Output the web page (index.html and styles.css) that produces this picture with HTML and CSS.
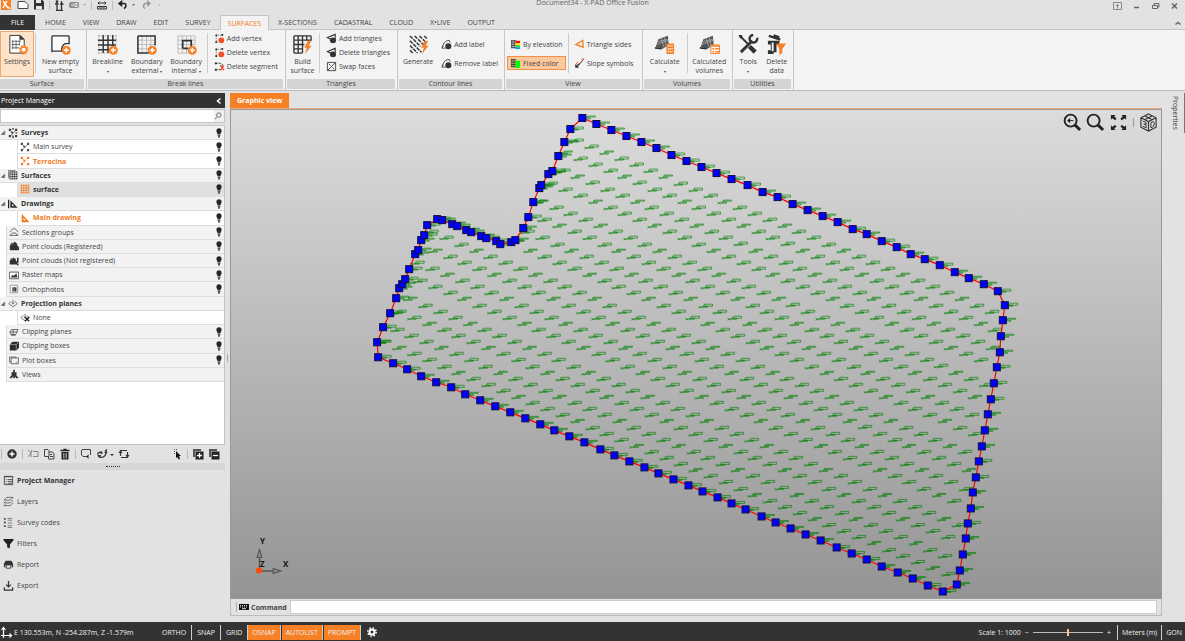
FILE: index.html
```html
<!DOCTYPE html>
<html lang="en">
<head>
<meta charset="utf-8">
<title>Document34 - X-PAD Office Fusion</title>
<link rel="stylesheet" href="styles.css">
</head>
<body>
<svg class="defs" aria-hidden="true">
  <symbol id="bulb" viewBox="0 0 6 10"><path d="M3 .3a2.6 2.6 0 0 1 2.6 2.6c0 1.2-.9 1.7-1.1 3.1h-3C1.300 4.600.4 4.100.4 2.900A2.600 2.600 0 0 1 3 .3zM1.600 6.500h2.800v1.200H1.600zM2 8.200h2v1.300H2z" fill="#262626"/></symbol>
  <symbol id="plus" viewBox="0 0 10 10"><circle cx="5" cy="5" r="4.700" fill="#f58025"/><path d="M5 2.400v5.200M2.400 5h5.200" stroke="#fff" stroke-width="1.500"/></symbol>
  <symbol id="bolt" viewBox="0 0 8 14"><path d="M4 0 .6 7h2.600L1 13.500 7.700 5H5L7.500 0z" fill="#f58025"/></symbol>
  <symbol id="vertex" viewBox="0 0 12 12"><path d="M2.500 10.500V2.500h7" fill="none" stroke="#666" stroke-dasharray="1 1"/><path d="M1.500 1.500h2v2h-2zM8 1h2v2H8zM1.500 9h2v2h-2z" fill="#333"/><circle cx="8" cy="8" r="3.200" fill="#f0512d"/></symbol>
  <symbol id="tri" viewBox="0 0 12 12"><path d="M10 1.500 1.500 5 10 9.500z" fill="none" stroke="#333" stroke-width="1.200"/><circle cx="7.500" cy="8" r="3.200" fill="#333"/></symbol>
  <symbol id="contour" viewBox="0 0 12 12"><path d="M1.500 9.500C3 3 5 2 9 1.500L10 4M2 7l-1 3h4" fill="none" stroke="#444"/><circle cx="8" cy="8" r="3.300" fill="#333"/></symbol>
  <symbol id="nodes" viewBox="0 0 12 12"><path d="M3 9.500 9 3M2.500 3 5 5" stroke="currentColor" stroke-width=".8"/><path d="M1 1h2.500v2.500H1zM8.500 1H11v2.500H8.500zM1 8.500h2.500V11H1zM8.500 8.500H11V11H8.500zM4 4.500h2v2H4z" fill="currentColor"/></symbol>
  <symbol id="mesh" viewBox="0 0 12 12"><path d="M1 1.500h10M1 4.500h10M1 7.500h10M1 10.500h10M1.500 1v10M4.500 1v10M7.500 1v10M10.500 1v10" stroke="currentColor" fill="none"/></symbol>
  <symbol id="square" viewBox="0 0 12 12"><path d="M2 1v10h9.500z" fill="currentColor"/><path d="M4.300 6v2.700H7z" fill="#fff"/></symbol>
  <symbol id="cloud" viewBox="0 0 12 12"><path d="M1 11V5.500L3 2l2 .5L7 1l2.500 2 .5 2.500 2 2V11z" fill="#333"/><path d="m2 5 4-3" stroke="#aaa" stroke-width=".7"/></symbol>
  <symbol id="plane" viewBox="0 0 12 12"><path d="M3.500 4 1 7l5 3.500L11 7 8.500 4M6 2v5M4.500 5.500 6 7.500l1.500-2" fill="none" stroke="#555" stroke-width=".9"/></symbol>
  <symbol id="surf" viewBox="0 0 22 22"><path d="m2 15 3-9 11-4 1 11-7 4z" fill="#555"/><path d="m3 12 14-5M4 9l12-3M8 5l4 11M12 4l2 11" stroke="#bbb" stroke-width=".8"/><path d="m1 16 8 1" stroke="#333" stroke-width="2"/></symbol>
</svg>

<header class="titlebar">
  <div class="quick">
    <svg width="12" height="11" viewBox="0 0 12 11"><path d="M1 0h10v10H1z" fill="#f58025"/><path d="m3 1 5 7M7 1 3 8M8 7l2 2" stroke="#fff" stroke-width="1.500"/></svg>
    <svg width="12" height="10" viewBox="0 0 12 10"><path d="M1 1.500h7l3 3v4H1z" fill="#fff" stroke="#444"/></svg>
    <svg width="10" height="10" viewBox="0 0 10 10"><path d="M0 0h8.500L10 2v7.500H0z" fill="#333"/><path d="M2 0h5v3H2zM2 6h6v3.500H2z" fill="#e8e8e8"/></svg>
    <i></i>
    <svg width="9" height="11" viewBox="0 0 9 11"><path d="M2 2v8M6.500 1v9M0 4h3.500M5 4h3.500M1 10.500h7" stroke="#333" stroke-width="1.300"/><circle cx="2" cy="1.500" r="1.300" fill="#333"/></svg>
    <svg width="17" height="10" viewBox="0 0 17 10"><rect y="2" width="10" height="6" rx="2" fill="#888"/><path d="M2 5h1m1-1.500v3m2-3h2v3H6z" stroke="#eee" fill="none"/><path d="m14 4 3 0-1.500 2z" fill="#aaa"/></svg>
    <i></i>
    <svg width="10" height="10" viewBox="0 0 10 10"><path d="M1 3h8M1 3l1.500-1.500M1 3l1.500 1.500M9 3 7.500 1.500M9 3 7.500 4.500M.5 9V6.500h9V9zM3 7v1.500M5 7v1.500M7 7v1.500" stroke="#333" fill="none"/></svg>
    <i></i>
    <svg width="19" height="10" viewBox="0 0 19 10"><path d="M1 3.500h5.500c2.500 1 1.500 4-.5 5M1 3.500 3.500 1.500v4z" stroke="#222" stroke-width="1.500" fill="none"/><path d="M14 4h3l-1.500 2z" fill="#777"/></svg>
    <svg width="19" height="10" viewBox="0 0 19 10"><path d="M8 3.500H3c-2 1-2 4 0 5M8 3.500 6 1.500v4z" stroke="#999" stroke-width="1.500" fill="none"/><path d="M16 4h3l-1.500 2z" fill="#bbb"/></svg>
  </div>
  <div class="doc-title">Document34 - X-PAD Office Fusion</div>
  <div class="window-buttons">
    <button aria-label="Ribbon options"><svg width="9" height="8" viewBox="0 0 9 8"><path d="M.5.5h8v7h-8zM4.500 6.500V2.500M3 4l1.500-1.500L6 4" fill="none" stroke="#888"/></svg></button>
    <button aria-label="Minimize"><svg width="9" height="8" viewBox="0 0 9 8"><path d="M2 5.500h5" stroke="#666" stroke-width="1.500"/></svg></button>
    <button aria-label="Restore"><svg width="9" height="8" viewBox="0 0 9 8"><path d="M3 3V1.500h5V5H6.500M1.500 3.500h5v3h-5z" fill="none" stroke="#666"/></svg></button>
    <button aria-label="Close"><svg width="9" height="8" viewBox="0 0 9 8"><path d="m2 1.500 5 5M7 1.500l-5 5" stroke="#666" stroke-width="1.500"/></svg></button>
  </div>
</header>

<nav class="tabs">
  <button class="file">FILE</button>
  <button>HOME</button><button>VIEW</button><button>DRAW</button><button>EDIT</button><button>SURVEY</button>
  <button class="current">SURFACES</button>
  <button>X-SECTIONS</button><button>CADASTRAL</button><button>CLOUD</button><button>X•LIVE</button><button>OUTPUT</button>
  <button class="collapse" aria-label="Collapse ribbon"><svg width="8" height="6" viewBox="0 0 8 6"><path d="m1.500 4.500 2.500-2 2.500 2" fill="none" stroke="#666" stroke-width="1.500"/></svg></button>
</nav>

<div class="ribbon">
  <section class="group g-surface">
    <div class="tools">
      <button class="big on"><svg viewBox="0 0 22 22"><path d="M3 1.500h11l4 4V20H3z" fill="#fff" stroke="#333"/><path d="M13 1v5h5z" fill="#333"/><path d="M5 7.500h10M5 11h8M5 14.500h8M6 7v9M9.500 7v9M13 7v5" stroke="#555" stroke-width=".9"/><circle cx="17.500" cy="16.500" r="3" fill="#fff" stroke="#f58025" stroke-width="1.600"/><circle cx="17.500" cy="16.500" r="4.400" fill="none" stroke="#f58025" stroke-width="1.400" stroke-dasharray="1.700 1.750"/></svg><span>Settings</span></button>
      <i class="rule"></i>
      <button class="big wide"><svg viewBox="0 0 22 22"><path d="M2 2h18v11h-6v7H2z" fill="#fafafa"/><path d="M2 2h18M2 2v17M20 2v8h-4q-4 2-4 8H2" fill="none" stroke="#333" stroke-width="1.400"/><use href="#plus" x="12" y="12" width="10" height="10"/></svg><span>New empty<br>surface</span></button>
    </div>
    <h2>Surface</h2>
  </section>
  <section class="group g-break">
    <div class="tools">
      <button class="big"><svg viewBox="0 0 22 22"><path d="M1 2h19M1 20h14M2 1v19M20 1v10" stroke="#aaa" stroke-dasharray="2 1"/><path d="M1 6.500h19M1 11.500h19M1 16.500h14M6.500 1v19M11.500 1v19M16.500 1v12" stroke="#333" stroke-width="1.500"/><use href="#plus" x="12" y="12" width="10" height="10"/></svg><span>Breakline<br><small>▾</small></span></button>
      <button class="big"><svg viewBox="0 0 22 22"><path d="M6.500 2v18M11 2v18M15.500 2v18M2 6.500h18M2 11h18M2 15.500h18" stroke="#bbb"/><path d="M2 2h18v10M2 2v18h12" fill="none" stroke="#333" stroke-width="1.600"/><use href="#plus" x="12" y="12" width="10" height="10"/></svg><span>Boundary<br>external <small>▾</small></span></button>
      <button class="big"><svg viewBox="0 0 22 22"><path d="M2 2v18M6.500 2v18M11 2v18M15.500 2v12M20 2v10M2 2h18M2 6.500h18M2 11h18M2 15.500h12M2 20h12" stroke="#bbb"/><path d="M7 15V7h9v6M7 15h6" fill="none" stroke="#333" stroke-width="1.800"/><use href="#plus" x="12" y="12" width="10" height="10"/></svg><span>Boundary<br>internal <small>▾</small></span></button>
      <i class="rule"></i>
      <div class="stack">
        <button><svg><use href="#vertex"/></svg>Add vertex</button>
        <button><svg><use href="#vertex"/></svg>Delete vertex</button>
        <button><svg viewBox="0 0 12 12"><path d="M1 2.500h6l3 2M1 9.500h7M7 5l3 1" fill="none" stroke="#333" stroke-dasharray="3 1"/><path d="M1 1.500h2v2H1zM1 8.500h2v2H1z" fill="#333"/><path d="m7 5 4 5M11 5l-4 5" stroke="#f0512d" stroke-width="1.500"/></svg>Delete segment</button>
      </div>
    </div>
    <h2>Break lines</h2>
  </section>
  <section class="group g-triangles">
    <div class="tools">
      <button class="big"><svg viewBox="0 0 22 22"><path d="M2 2h18M2 6.500h18M2 11h11M2 15.500h9M2 20h9M2 2v18M6.500 2v18M11 2v18M15.500 2v5M20 2v5" stroke="#333" stroke-width="1.400"/><use href="#bolt" x="12" y="7" width="9" height="15"/></svg><span>Build<br>surface</span></button>
      <i class="rule"></i>
      <div class="stack">
        <button><svg><use href="#tri"/></svg>Add triangles</button>
        <button><svg><use href="#tri"/></svg>Delete triangles</button>
        <button><svg viewBox="0 0 12 12"><path d="M1.500 1.500h9v9h-9zM1.500 10.500l9-9M3 3l2 2M7 7l2 2" fill="none" stroke="#444"/></svg>Swap faces</button>
      </div>
    </div>
    <h2>Triangles</h2>
  </section>
  <section class="group g-contour">
    <div class="tools">
      <button class="big"><svg viewBox="0 0 22 22"><path d="m2 2 11 11M7 2l9 9M12 2l6 6M17 2l3 3M2 7l12 12M2 12l8 8M2 17l3 3" stroke="#333" stroke-width="1.500" stroke-dasharray="4 1"/><use href="#bolt" x="13" y="7" width="9" height="15"/></svg><span>Generate</span></button>
      <div class="stack pair">
        <button><svg><use href="#contour"/></svg>Add label</button>
        <button><svg><use href="#contour"/></svg>Remove label</button>
      </div>
    </div>
    <h2>Contour lines</h2>
  </section>
  <section class="group g-view">
    <div class="tools">
      <div class="stack pair">
        <button><svg viewBox="0 0 12 12"><path d="M1 2h6M1 4.500h6M1 7h6M1 9.500h6M2 1v9M4.500 1v9" stroke="#333"/><path d="M6 2h5v2.500H6z" fill="red"/><path d="M6 4.500h5V7H6z" fill="#fd0"/><path d="M6 7h5v2H6z" fill="#0d3"/><path d="M6 9h5v2H6z" fill="#09f"/></svg>By elevation</button>
        <button class="on"><svg viewBox="0 0 12 12"><path d="M1 2h6M1 4.500h6M1 7h6M1 9.500h6M2 1v9M4.500 1v9" stroke="#333"/><path d="M6 3h5v8H6z" fill="#0f0"/></svg>Fixed color</button>
      </div>
      <i class="rule"></i>
      <div class="stack pair">
        <button><svg viewBox="0 0 12 12"><path d="M2 6 9.500 1.500 10 9z" fill="none" stroke="#f58025" stroke-width="1.500"/></svg>Triangle sides</button>
        <button><svg viewBox="0 0 12 12"><path d="M2.500 9.500 6 6M2 7v3h3" fill="none" stroke="#333" stroke-width="1.400"/><path d="m4 4-2 3M7 5l4-4M8 1h3" stroke="#f0512d"/><path d="m5 8 5-6" stroke="#444"/></svg>Slope symbols</button>
      </div>
    </div>
    <h2>View</h2>
  </section>
  <section class="group g-volumes">
    <div class="tools">
      <button class="big"><svg viewBox="0 0 22 22"><use href="#surf" width="20" height="20"/><path d="M13 10h8v11h-8z" fill="#f58025"/><path d="M14.500 12.500h5M14.500 15.500h5M14.500 18.500h5" stroke="#fff" stroke-width="1.300" stroke-dasharray="1.300 .6"/></svg><span>Calculate<br><small>▾</small></span></button>
      <i class="rule"></i>
      <button class="big"><svg viewBox="0 0 22 22"><use href="#surf" width="20" height="20"/><path d="M12.500 11.500h9v9h-9z" fill="#fff" stroke="#f58025"/><path d="M13 12.500h8M14 15.500h2m1 0h4M14 18.500h2m1 0h4" stroke="#f58025" stroke-width="1.500"/></svg><span>Calculated<br>volumes</span></button>
    </div>
    <h2>Volumes</h2>
  </section>
  <section class="group g-utilities">
    <div class="tools">
      <button class="big"><svg viewBox="0 0 22 22"><path d="m2 2 9 9" stroke="#333" stroke-width="2"/><path d="m12 13 6 6" stroke="#333" stroke-width="4.500"/><path d="m3 19 12-12" stroke="#333" stroke-width="3"/><path d="M20 4a4 4 0 1 1-4-3" fill="none" stroke="#333" stroke-width="2.500"/><path d="M1 1h3l1 3-2 1-2-2z" fill="#333"/></svg><span>Tools<br><small>▾</small></span></button>
      <button class="big"><svg viewBox="0 0 22 22"><path d="m3 2 12 4M8 1.500l6 2" stroke="#333" stroke-width="2.500"/><path d="M2 7h12v4h-3v8h-3v2H2v-4h3v-6H2z" fill="#333"/><path d="M6 9h2v9H6z" fill="#f3f3f3"/><path d="M11 10h10l-4 6v4l-3 2v-6z" fill="#f58025"/></svg><span>Delete<br>data</span></button>
    </div>
    <h2>Utilities</h2>
  </section>
</div>

<main class="workspace">
  <aside class="side">
    <header class="side-head"><span>Project Manager</span><button aria-label="Collapse panel"><svg width="6" height="8" viewBox="0 0 6 8"><path d="M4.500 1.500 1.500 4l3 2.500" fill="none" stroke="#fff" stroke-width="1.500"/></svg></button></header>
    <div class="search"><input type="text" aria-label="Search project"><button aria-label="Search"><svg width="8" height="8" viewBox="0 0 8 8"><circle cx="4.800" cy="3" r="2.200" fill="none" stroke="#777"/><path d="M3.200 4.700.8 7.200" stroke="#777"/></svg></button></div>
    <ul class="tree">
      <li class="root"><b>◢</b><svg viewBox="0 0 12 12"><use href="#nodes"/><path d="M5 0h2v2H5zM9 5h2v2H9zM5 9h2v3H5z" fill="#555"/></svg><span>Surveys</span><svg class="bulb"><use href="#bulb"/></svg></li>
      <li class="leaf"><svg><use href="#nodes"/></svg><span>Main survey</span><svg class="bulb"><use href="#bulb"/></svg></li>
      <li class="leaf active"><svg><use href="#nodes"/></svg><span>Terracina</span><svg class="bulb"><use href="#bulb"/></svg></li>
      <li class="root"><b>◢</b><svg viewBox="0 0 12 12"><path d="M0 .5h9M.5 0v10M3 0v2M6 0v2M0 4h2M0 7h2" stroke="#777"/><use href="#mesh" x="1" y="1" width="11" height="11"/></svg><span>Surfaces</span><svg class="bulb"><use href="#bulb"/></svg></li>
      <li class="leaf selected"><svg class="orange"><use href="#mesh"/></svg><span>surface</span><svg class="bulb"><use href="#bulb"/></svg></li>
      <li class="root"><b>◢</b><svg viewBox="0 0 12 12"><path d="M0 1h1.500v10H0z" fill="#222"/><use href="#square" x="1" width="11"/></svg><span>Drawings</span><svg class="bulb"><use href="#bulb"/></svg></li>
      <li class="leaf active"><svg><use href="#square"/></svg><span>Main drawing</span><svg class="bulb"><use href="#bulb"/></svg></li>
      <li><svg viewBox="0 0 12 12"><path d="M1 6c2 0 1-4 5-4s3 4 5 4M1 10c2 0 1-3 5-3s3 3 5 3z" fill="none" stroke="#555"/></svg><span>Sections groups</span><svg class="bulb"><use href="#bulb"/></svg></li>
      <li><svg><use href="#cloud"/></svg><span>Point clouds (Registered)</span><svg class="bulb"><use href="#bulb"/></svg></li>
      <li><svg viewBox="0 0 12 12"><use href="#cloud" width="10"/><path d="M10.500 2v6m0 1v2" stroke="#222" stroke-width="1.800"/></svg><span>Point clouds (Not registered)</span><svg class="bulb"><use href="#bulb"/></svg></li>
      <li><svg viewBox="0 0 12 12"><path d="M.5 2.500h11v8H.5z" fill="#fff" stroke="#444"/><path d="m2 9 2-3 2 1 3-3 1 5z" fill="#333"/></svg><span>Raster maps</span><svg class="bulb"><use href="#bulb"/></svg></li>
      <li><svg viewBox="0 0 12 12"><path d="M1.500 1.500h9v9h-9z" fill="#fff" stroke="#888"/><path d="M4 4h5v5H4z" fill="#333"/><path d="M5.500 5h1v3h-1z" fill="#ccc"/></svg><span>Orthophotos</span><svg class="bulb"><use href="#bulb"/></svg></li>
      <li class="root"><b>◢</b><svg><use href="#plane"/></svg><span>Projection planes</span></li>
      <li class="leaf"><svg viewBox="0 0 12 12"><use href="#plane"/><path d="m6 6 5 5m0-5-5 5" stroke="#222" stroke-width="1.600"/></svg><span>None</span></li>
      <li><svg viewBox="0 0 12 12"><path d="M3 3h8L9 6H1zM2 9h6l2-4M5 3v7M1 6l2 4h5" fill="none" stroke="#555"/></svg><span>Clipping planes</span><svg class="bulb"><use href="#bulb"/></svg></li>
      <li><svg viewBox="0 0 12 12"><path d="M1 4.500 4 1h8v7l-3 3.500H1z" fill="#2b2b2b"/><path d="M1 4.300h7.700v7M8.700 4.300 11.500 1" fill="none" stroke="#ccc" stroke-width=".7"/></svg><span>Clipping boxes</span><svg class="bulb"><use href="#bulb"/></svg></li>
      <li><svg viewBox="0 0 12 12"><path d="M2.500 3.500h9v7h-9zM2.500 8.500h-2v-6h8v1" fill="none" stroke="#555"/><path d="M8 8h2v1H8z" fill="#777"/></svg><span>Plot boxes</span><svg class="bulb"><use href="#bulb"/></svg></li>
      <li><svg viewBox="0 0 12 12"><path d="M5 1h2v3h2v4l2 2v1H9L7 9v2H5V9l-2 2H1v-1l2-2V4h2z" fill="#333"/></svg><span>Views</span></li>
    </ul>
    <div class="side-tools">
      <i></i>
      <button aria-label="Add"><svg viewBox="0 0 12 12"><circle cx="6" cy="6" r="4.700" fill="#333"/><path d="M6 3.500v5M3.500 6h5" stroke="#fff" stroke-width="1.400"/></svg></button>
      <i></i>
      <button aria-label="Rename"><svg viewBox="0 0 12 12"><path d="m1 2 3 3v4M1 9l3-4 1-3M6 3.500h5v5H6" fill="none" stroke="#888"/></svg></button>
      <button aria-label="Copy"><svg viewBox="0 0 12 12"><path d="M1.500 1.500H5l1 1v6H1.500zM6 4h3.500l1.500 2v5H5.500V8.500M7 6.500h2M7 8.500h3" fill="none" stroke="#444"/></svg></button>
      <button aria-label="Delete"><svg viewBox="0 0 12 12"><path d="M1.500 2.500h9M4.500 1.500h3" stroke="#222" stroke-width="1.400"/><path d="M2.500 4h7v7.500h-7z" fill="#222"/><path d="M4.500 5v5.500m1.500-5.500v5.500M7.500 5v5.500" stroke="#ddd" stroke-width=".6"/></svg></button>
      <i></i>
      <button aria-label="Send"><svg viewBox="0 0 12 12"><path d="M2 1.500h8.500V7M1.500 2v5L3 8.500h4" fill="none" stroke="#444"/><path d="M10.500 8H7l1.500-2v5L6 8z" fill="#222"/></svg></button>
      <button aria-label="Orbit" class="menu"><svg viewBox="0 0 18 12"><path d="M1.500 6C2 4 4 4 6 4.500M2 6.500c0 4 7 4 8-1.500M9 3l2-1.500" fill="none" stroke="#333" stroke-width="1.300"/><path d="m5 3 2 2-2.500 1.500zM8 4.500l2.500-2 1 3zM2 7l3 0-1.500 3z" fill="#333"/><path d="M14 6h4l-2 2z" fill="#333"/></svg></button>
      <button aria-label="Refresh"><svg viewBox="0 0 12 12"><path d="M2.500 8V2.500H9M9.500 4v5.500H3M1 5l1.500-2L4 5M8 7l1.500 2L11 7" fill="none" stroke="#333" stroke-width="1.200"/></svg></button>
      <span class="grow"></span>
      <button aria-label="Pick"><svg viewBox="0 0 12 12"><path d="M3.500 6V1.500H7" fill="none" stroke="#555" stroke-dasharray="1 1"/><path d="m5 3 5 5H8l1 3-1.500.5L6.500 9 5 10z" fill="#111"/></svg></button>
      <i></i>
      <button aria-label="Expand all"><svg viewBox="0 0 12 12"><path d="M1 1h8v2H3v6H1z" fill="#555"/><path d="M3.500 3.500h8v8h-8z" fill="#222"/><path d="M7.500 5v5M5 7.500h5" stroke="#fff" stroke-width="1.300"/></svg></button>
      <button aria-label="Collapse all"><svg viewBox="0 0 12 12"><path d="M1 1h8v2H3v6H1z" fill="#555"/><path d="M3.500 3.500h8v8h-8z" fill="#222"/><path d="M5 7.500h5" stroke="#fff" stroke-width="1.300"/></svg></button>
    </div>
    <div class="splitter"></div>
    <nav class="panels">
      <button class="current"><svg viewBox="0 0 12 12"><path d="M1.500 1.500h9v9h-9z" fill="#eee" stroke="#444"/><path d="M1 2h10M3 5h1m1 0h5M3 7h1m1 0h5M3 9h1m1 0h5" stroke="#444"/></svg>Project Manager</button>
      <button><svg viewBox="0 0 12 12"><path d="M4 1.500h7L8 4.500H1zM1 7.500h7l3-3M1 10.500h7l3-3M1 7.500 2.500 6M1 10.500 2.500 9" fill="none" stroke="#666"/></svg>Layers</button>
      <button><svg viewBox="0 0 12 12"><path d="M1 1h2v2H1zM1 5h2v2H1zM1 9h2v2H1z" fill="#555"/><path d="M5 1.500h5M5 3.500h5M5 6.500h5M5 9.500h5M5 11.500h5" stroke="#777"/></svg>Survey codes</button>
      <button><svg viewBox="0 0 12 12"><path d="M.5 1h11v1.500L7.500 7v4.500l-3-1.500V7l-4-4.500z" fill="#222"/></svg>Filters</button>
      <button><svg viewBox="0 0 12 12"><path d="M1 9V5l2-3h6l2 3v4H9.500V6.500h-7V9z" fill="#333"/><path d="M3.500 6.500h5V10h-5z" fill="#eee" stroke="#333"/></svg>Report</button>
      <button><svg viewBox="0 0 12 12"><path d="M6 1v6M3.500 5 6 7.500 8.500 5M1.500 8v3h9V8" fill="none" stroke="#333" stroke-width="1.400"/></svg>Export</button>
    </nav>
  </aside>
  <div class="handle"></div>

  <section class="center">
    <div class="view-tabs"><button>Graphic view</button></div>
    <div class="view">
      <svg class="drawing" viewBox="231 110 929 486" preserveAspectRatio="xMinYMin meet" role="img" aria-label="Terrain surface with boundary vertices">
        <g id="labels" fill="none" stroke="#008000" stroke-opacity=".8" stroke-width=".8"></g>
        <path id="boundary" fill="none" stroke="#f00" stroke-width="1.200"/>
        <g id="vertices" fill="#00f" stroke="#101040" stroke-width="1"></g>
        <g stroke="#555" fill="none"><path d="M259.500 568V550M259 570.500h18" stroke-width="1.500"/><path d="m257 557 2.500-8 2.500 8zM273 568l8 2.500-8 2.500z" fill="#888"/></g>
        <circle cx="259" cy="570" r="3" fill="#ff4a00"/>
        <g class="axis"><text x="260" y="544">Y</text><text x="260" y="567">Z</text><text x="283" y="567">X</text></g>
      </svg>
      <div class="view-tools">
        <button aria-label="Zoom previous"><svg viewBox="0 0 20 20"><circle cx="8" cy="8" r="6.300" fill="none" stroke="#222" stroke-width="2"/><path d="m12.500 12.500 5.500 5.500" stroke="#222" stroke-width="3"/><path d="M5 8h6M5 8l2-2v4z" fill="#222" stroke="#222"/></svg></button>
        <button aria-label="Zoom window"><svg viewBox="0 0 20 20"><circle cx="8" cy="8" r="6.300" fill="none" stroke="#222" stroke-width="2"/><path d="m12.500 12.500 5.500 5.500" stroke="#222" stroke-width="3"/></svg></button>
        <button aria-label="Zoom extents"><svg viewBox="0 0 20 20"><path d="M2 2h5L5.500 3.500 8 6 6.500 7.500 3.500 5.500 2 7zM18 2v5l-1.500-1.500L13.500 7.500 12 6l2.500-2.500L13 2zM2 18v-5l1.500 1.500L6.500 12.500 8 14l-2.500 2.500L7 18zM18 18h-5l1.500-1.500L12 14l1.500-1.500 3 2L18 13z" fill="#222"/></svg></button>
        <i></i>
        <button aria-label="3D view"><svg viewBox="0 0 20 20"><path d="m10 1 8 4v10l-8 4-8-4V5zM2 5l8 4 8-4M10 9v10M6 3l8 4M14 3 6 7" fill="none" stroke="#333" stroke-width="1.200"/><path d="M4 8.500 7.500 10v2L5 11.500 7.500 13v2.500L4 14M12.500 10v5.500l2-.8c2-1.500 2-6.500 0-5.500z" fill="none" stroke="#333"/></svg></button>
      </div>
    </div>
    <label class="command"><i></i><svg viewBox="0 0 10 6"><path d="M0 0h10v6H0z" fill="#111"/><path d="M1 1.500h8M1 3h8" stroke="#ddd" stroke-dasharray="1 1"/><path d="M3 4.700h4" stroke="#ddd"/></svg><span>Command</span><input type="text"></label>
  </section>

  <aside class="dock"><button>Properties</button></aside>
</main>

<footer class="status">
  <svg width="14" height="12" viewBox="0 0 14 12"><path d="M3.500 2v7.500H11M1.500 4l2-2.500 2 2.500M9.500 7.500l2 2-2 2M1 9.500h2.500V12" fill="none" stroke="#fff" stroke-width="1.200"/></svg>
  <span class="coords">E 130.553m, N -254.287m, Z -1.579m</span>
  <button>ORTHO</button><button>SNAP</button><button>GRID</button><button class="on">OSNAP</button><button class="on">AUTOLIST</button><button class="on">PROMPT</button>
  <button class="gear" aria-label="Settings"><svg width="10" height="10" viewBox="0 0 10 10"><circle cx="5" cy="5" r="2.500" fill="none" stroke="#fff" stroke-width="2"/><circle cx="5" cy="5" r="4.200" fill="none" stroke="#fff" stroke-width="1.400" stroke-dasharray="1.650 1.650"/></svg></button>
  <span class="grow"></span>
  <label class="scale">Scale 1: 1000 <span>−</span><input type="range" min="0" max="100" value="50"><span>+</span></label>
  <button class="unit">Meters (m)</button><button class="unit last">GON</button>
</footer>
<script src="script.js"></script>
</body>
</html>
```
FILE: styles.css
```css
* { box-sizing: border-box; }
body {
  margin: 0; height: 100vh; display: flex; flex-direction: column; overflow: hidden;
  background: #e2e2e2; color: #444;
  font: 7px/9px "Open Sans", "Noto Sans", sans-serif;
}
button, input { font: inherit; color: inherit; margin: 0; padding: 0; border: 0; background: none; }
svg { display: block; flex: none; }
.defs { position: absolute; width: 0; height: 0; }
.grow { flex: 1; }

.titlebar { height: 15px; display: grid; grid-template-columns: 1fr auto 1fr; }
.quick { display: flex; align-items: center; gap: 5px; height: 10px; }
.quick i { width: 1px; height: 9px; background: #bbb; }
.doc-title { margin-top: -2px; color: #666; }
.window-buttons { display: flex; justify-content: flex-end; gap: 10px; padding: 1px 6px 0; height: 10px; }

.tabs { display: flex; gap: 1px; height: 15px; border-bottom: 1px solid #c4c4c4; }
.tabs button { padding: 0 8px; height: 15px; }
.tabs .file { width: 35px; margin-right: 1px; background: #333; color: #fff; }
.tabs .current { background: #f3f3f3; border: 1px solid #c4c4c4; border-bottom: 0; color: #f37a1f; padding: 0 7px; }
.tabs .collapse { margin-left: auto; padding: 0 3px; }

.ribbon { display: flex; height: 61px; background: #f3f3f3; border-bottom: 1px solid #bbb; }
.group { display: flex; flex-direction: column; border-right: 1px solid #c6c6c6; padding: 0 2px 1px 0; margin-right: 1px; }
.group h2 { margin: 0; height: 10px; background: #d4d4d4; font-size: 7px; font-weight: 400; text-align: center; }
.g-surface { width: 87px; }
.g-break { width: 198px; }
.g-triangles { width: 111px; }
.g-contour { width: 106px; }
.g-view { width: 137px; }
.g-volumes { width: 89px; }
.g-utilities { width: 60px; }
.tools { flex: 1; display: flex; align-items: flex-start; padding-top: 1px; }
.big { flex: 1; display: flex; flex-direction: column; align-items: center; gap: 2px; height: 46px; padding-top: 2px; border: 1px solid transparent; white-space: nowrap; }
.big svg { width: 21px; height: 21px; }
.big.wide { flex: 1.4; }
.big.on { background: #fde3ca; border-color: #f3a76c; }
.big small { font-size: 4px; }
.stack .on { background: #fcc99c; border-color: #ef914a; }
.rule { width: 1px; height: 40px; margin: 2px 1px 0; background: #ccc; }
.stack { flex: none; display: flex; flex-direction: column; padding: 0 2px; }
.stack button { display: flex; align-items: center; gap: 2px; height: 14px; padding: 0 2px; border: 1px solid transparent; white-space: nowrap; }
.stack svg { width: 11px; height: 11px; }
.pair { gap: 5px; padding: 6px 1px 0; }

.workspace { flex: 1; min-height: 0; display: flex; padding-top: 2px; }
.side { width: 225px; display: flex; flex-direction: column; }
.side-head { display: flex; justify-content: space-between; align-items: center; height: 15px; padding: 0 3px 0 1px; background: #333; color: #fff; }
.search { display: flex; height: 14px; margin: 1px 0 2px; border: 1px solid #c4c4c4; }
.search input { flex: 1; min-width: 0; background: #fff; }
.search button { width: 10px; background: #eee; }
.tree { list-style: none; margin: 0; padding: 0 0 62px; flex: none; height: 320px; display: grid; grid-auto-rows: 1fr; background: #fff; border: solid #c4c4c4; border-width: 1px 1px 1px 0; }
.tree li { display: flex; align-items: center; gap: 3px; margin-left: 6px; padding: 0 2px; background: #f2f2f2; border: solid #ddd; border-width: 0 0 1px 1px; }
.tree svg { width: 10px; height: 10px; }
.tree b { width: 4px; font-size: 5px; color: #666; }
.tree .root { margin-left: 0; padding-left: 1px; border-left: 0; color: #333; font-weight: 700; }
.tree .leaf { margin-left: 17px; background: #fff; }
.tree .active { color: #f37a1f; font-weight: 700; }
.tree .selected { background: #e0e0e0; font-weight: 700; color: #333; }
.tree .orange { color: #f58025; }
.tree .bulb { width: 6px; height: 10px; margin-left: auto; }
.side-tools { display: flex; align-items: center; gap: 4px; height: 18px; padding: 0 5px 0 1px; }
.side-tools i { width: 1px; height: 10px; background: #bbb; }
.side-tools svg { width: 12px; height: 12px; }
.side-tools .menu svg { width: 18px; }
.splitter { height: 7px; background: #d6d6d6; display: flex; justify-content: center; align-items: center; }
.splitter::after { content: ""; width: 14px; border-top: 1px dotted #333; }
.panels { display: flex; flex-direction: column; }
.panels button { display: flex; align-items: center; gap: 3px; height: 21px; padding-left: 3px; }
.panels svg { width: 11px; height: 11px; }
.panels .current { font-weight: 700; color: #333; }
.handle { width: 5px; display: flex; align-items: center; justify-content: center; }
.handle::after { content: ""; width: 1px; height: 8px; background: #aaa; }

.center { flex: 1; min-width: 0; display: flex; flex-direction: column; margin-bottom: 6px; }
.view-tabs { height: 16px; border-bottom: 1px solid #f0a773; }
.view-tabs button { height: 15px; padding: 0 7px; background: #f58025; color: #fff; font-weight: 700; }
.view { flex: 1; min-height: 0; position: relative; border: 1px solid #999; background: linear-gradient(#dcdcdc, #949494); }
.drawing { width: 100%; height: 100%; }
.axis { font: 700 8px "Open Sans", sans-serif; fill: #111; }
.view-tools { position: absolute; top: 3px; right: 3px; display: flex; align-items: center; gap: 4px; }
.view-tools svg { width: 19px; height: 19px; }
.view-tools i { width: 1px; height: 9px; margin: 0 1px; background: #999; }
.command { display: flex; align-items: center; gap: 2px; height: 17px; padding: 1px 4px 1px 5px; border: 1px solid #bbb; border-top: 0; font-weight: 700; }
.command i { width: 1px; height: 10px; background: #aaa; }
.command svg { width: 10px; height: 6px; }
.command input { flex: 1; height: 14px; margin-left: 1px; background: #fff; border: 1px solid #ccc; font-weight: 400; }
.dock { width: 23px; }
.dock button { width: 100%; height: 40px; padding-left: 4px; writing-mode: vertical-rl; border-right: 1px solid #777; }

.status { display: flex; align-items: center; height: 19px; padding-top: 1px; background: #333; color: #f0f0f0; }
.coords { width: 143px; white-space: nowrap; }
.status button { height: 15px; padding: 0 5px; border-right: 1px solid #ccc; white-space: nowrap; }
.status .on { background: #f58025; padding: 0 4px; margin-right: 1px; }
.status .gear { border: 0; }
.scale { display: flex; align-items: center; gap: 4px; margin-right: 6px; }
.scale input { width: 70px; height: 8px; appearance: none; background: linear-gradient(#bbb, #bbb) center / 100% 1px no-repeat; }
.scale input::-webkit-slider-thumb { appearance: none; width: 2px; height: 7px; background: #fcc28f; }
.status .unit { border-left: 1px solid #ccc; border-right: 0; padding: 0 4px; }
.status .last { padding-right: 3px; }
```
FILE: script.js
```js
const outline = [
  [582,118],[596,124],[611,130],[626,136],[641,142],[656,148],[671,155],[686,161],[701,167],[716,173],
  [731,179],[747,185],[762,192],[777,197],[792,204],[807,210],[822,216],[837,222],[852,229],[866,234],
  [881,241],[896,247],[910,254],[924,259],[939,265],[954,272],[968,278],[983,284],[997,291],[1004,305],
  [1002,320],[1000,336],[999,352],[996,367],[993,383],[990,399],[987,414],[984,430],[981,446],[978,461],
  [975,477],[972,492],[970,508],[967,523],[965,538],[962,554],[959,570],[956,584],[942,591],[927,585],
  [912,578],[897,572],[881,566],[866,559],[851,553],[836,547],[820,540],[805,534],[790,528],[775,522],
  [761,516],[745,509],[731,503],[717,497],[702,491],[688,485],[673,479],[658,473],[644,467],[629,461],
  [614,455],[600,449],[584,442],[569,436],[554,430],[540,424],[525,418],[510,412],[495,406],[480,400],
  [465,394],[451,387],[436,382],[421,376],[407,369],[393,363],[378,357],[377,342],[383,327],[390,313],
  [396,298],[399,288],[402,284],[405,279],[409,269],[415,254],[418,250],[421,240],[424,235],[427,225],
  [437,219],[442,220],[452,224],[457,226],[466,230],[471,232],[481,236],[486,238],[496,241],[500,244],
  [511,242],[515,240],[523,228],[528,217],[533,202],[539,188],[541,185],[548,174],[552,171],[558,156],
  [564,142],[570,129]
];

function inside(x, y) {
  let hit = false;
  for (let i = 0, j = outline.length - 1; i < outline.length; j = i++) {
    const [ax, ay] = outline[i], [bx, by] = outline[j];
    if ((ay > y) !== (by > y) && x < (bx - ax) * (y - ay) / (by - ay) + ax) hit = !hit;
  }
  return hit;
}

// Elevation mark: a small cross with the reading drawn beside it.
function mark(x, y, dense) {
  const stub = `M${x + 2} ${y + 2}h6v-1h-4z`;
  const bar = `M${x + 4} ${y + 1}l1-2h8v${dense ? 1 : 2}h-9`;
  return `M${x - 1} ${y + 1}l3 2m0-2l-3 2${stub}${bar}`;
}

let d = '';
for (const [x, y] of outline) d += mark(x, y - 1, y % 2 === 0);
for (let row = -35; row < 40; row++) {
  const shift = [0, 4, -4, 1][(row + 40) % 4];
  for (let col = -10; col < 60; col++) {
    const x = Math.round(447 + col * 14.8 - row * 1.5 + shift);
    const y = Math.round(275 + col * 6.1 + row * 18.3);
    if (inside(x - 5, y) && inside(x + 5, y) && inside(x, y - 5) && inside(x, y + 5)) d += mark(x - 6, y - 1, (row * 3 + col * 5) % 4 === 0);
  }
}
document.getElementById('labels').innerHTML = `<path d="${d}"/>`;
document.getElementById('boundary').setAttribute('d', 'M' + outline.map(p => p.join(' ')).join('L') + 'Z');
document.getElementById('vertices').innerHTML =
  outline.map(([x, y]) => `<rect x="${x - 3.5}" y="${y - 3.5}" width="7" height="7"/>`).join('');
```
